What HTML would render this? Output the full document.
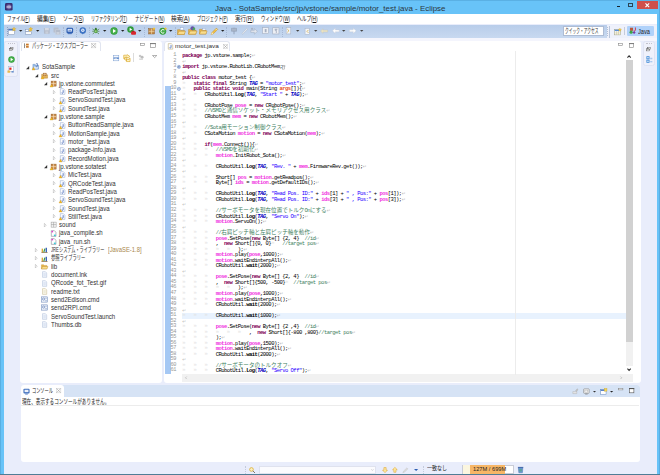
<!DOCTYPE html><html lang="ja"><head><meta charset="utf-8"><title>Java - SotaSample/src/jp/vstone/sample/motor_test.java - Eclipse</title><style>
*{box-sizing:border-box;margin:0;padding:0}
html,body{width:660px;height:475px;overflow:hidden}
body{position:relative;background:#68c3f8;box-shadow:inset 0.8px 0.8px 0 #56aadd, inset -0.8px 0 0 #56aadd;font-family:"Liberation Sans","Noto Sans CJK JP",sans-serif;color:#222;}
.abs{position:absolute}
.f{position:absolute;white-space:pre;transform-origin:0 50%;display:block}
svg{position:absolute;overflow:visible}
#code{position:absolute;left:182.3px;top:53.15px;font-family:"Liberation Mono","Noto Sans CJK JP",monospace;font-size:5.5px;line-height:5.54px;letter-spacing:-0.525px;white-space:pre;color:#000}
#code div{height:5.54px}
#code .j{font-size:5.55px;letter-spacing:0}
#code .k{color:#7f0055;font-weight:bold}
#code .s{color:#2a00ff}
#code .c{color:#3f7f5f}
#code .v{color:#f032e0;font-weight:bold}
#code .p{color:#e8501c;font-weight:bold}
#code .t{color:#0000c0;font-weight:bold;font-style:italic}
#code .b{font-weight:bold}
#code .tb{position:relative}
#code .tb::before{content:"\00bb";position:absolute;left:0;top:0;color:#e2e2e2}
#code div::after{content:"\21b5";color:#b0b0b0;font-family:"DejaVu Sans",sans-serif;font-size:4.6px;letter-spacing:0;font-weight:normal;font-style:normal}
#ln{position:absolute;left:164.3px;width:11.8px;top:53.15px;text-align:right;font-family:"Liberation Mono",monospace;font-size:5.3px;line-height:5.54px;letter-spacing:-0.405px;color:#979797}
#ln div{height:5.54px}
</style></head><body>
<svg style="left:4.5px;top:3.3px" width="7.6" height="7.6" viewBox="0 0 16 16"><rect width="16" height="16" rx="3" fill="#3a2d6e"/><circle cx="8" cy="8" r="6" fill="#564a8c"/><circle cx="8.5" cy="8" r="4.3" fill="#8f86b8"/><rect x="3" y="6.5" width="10" height="1" fill="#d8d4ea"/><rect x="3" y="8.8" width="10" height="1" fill="#d8d4ea"/></svg>
<span class="f" style="left:215.00px;top:3.86px;font-size:7.6px;line-height:9.88px;color:#2a3640;transform:scaleX(1.0442)">Java - SotaSample/src/jp/vstone/sample/motor_test.java - Eclipse</span>
<div class="abs" style="left:616.80px;top:5.70px;width:3.40px;height:1.40px;background:#16222b"></div>
<div class="abs" style="left:628.20px;top:3.10px;width:4.70px;height:3.80px;border:0.8px solid #2b4557;border-top-width:1.4px"></div>
<div class="abs" style="left:637.10px;top:0.60px;width:20.50px;height:8.60px;background:#cf4f4b"></div>
<svg style="left:645.2px;top:2.8px" width="4.6" height="4.6" viewBox="0 0 10 10"><path d="M1 1L9 9M9 1L1 9" stroke="#fff" stroke-width="2.4" fill="none"/></svg>
<div class="abs" style="left:3.50px;top:14.00px;width:653.40px;height:460.00px;background:#e9edfb"></div>
<div class="abs" style="left:0.00px;top:473.80px;width:660.00px;height:1.20px;background:#4f7d96"></div>
<div class="abs" style="left:3.50px;top:14.00px;width:653.30px;height:10.40px;background:#fff"></div>
<span class="f" style="left:6.50px;top:14.75px;font-size:6.7px;line-height:8.71px;color:#1a1a1a;transform:scaleX(0.6658)">ファイル</span><span class="f" style="left:24.31px;top:14.75px;font-size:6.7px;line-height:8.71px;color:#1a1a1a;transform:scaleX(0.6658)">(<u>F</u>)</span>
<span class="f" style="left:37.00px;top:14.75px;font-size:6.7px;line-height:8.71px;color:#1a1a1a;transform:scaleX(0.8521)">編集</span><span class="f" style="left:48.40px;top:14.75px;font-size:6.7px;line-height:8.71px;color:#1a1a1a;transform:scaleX(0.8521)">(<u>E</u>)</span>
<span class="f" style="left:62.50px;top:14.75px;font-size:6.7px;line-height:8.71px;color:#1a1a1a;transform:scaleX(0.7503)">ソース</span><span class="f" style="left:77.31px;top:14.75px;font-size:6.7px;line-height:8.71px;color:#1a1a1a;transform:scaleX(0.7503)">(<u>S</u>)</span>
<span class="f" style="left:90.50px;top:14.75px;font-size:6.7px;line-height:8.71px;color:#1a1a1a;transform:scaleX(0.5989)">リファクタリング</span><span class="f" style="left:122.38px;top:14.75px;font-size:6.7px;line-height:8.71px;color:#1a1a1a;transform:scaleX(0.5989)">(<u>T</u>)</span>
<span class="f" style="left:134.50px;top:14.75px;font-size:6.7px;line-height:8.71px;color:#1a1a1a;transform:scaleX(0.6903)">ナビゲート</span><span class="f" style="left:157.58px;top:14.75px;font-size:6.7px;line-height:8.71px;color:#1a1a1a;transform:scaleX(0.6903)">(<u>N</u>)</span>
<span class="f" style="left:171.00px;top:14.75px;font-size:6.7px;line-height:8.71px;color:#1a1a1a;transform:scaleX(0.8521)">検索</span><span class="f" style="left:182.40px;top:14.75px;font-size:6.7px;line-height:8.71px;color:#1a1a1a;transform:scaleX(0.8521)">(<u>A</u>)</span>
<span class="f" style="left:197.00px;top:14.75px;font-size:6.7px;line-height:8.71px;color:#1a1a1a;transform:scaleX(0.6320)">プロジェクト</span><span class="f" style="left:222.36px;top:14.75px;font-size:6.7px;line-height:8.71px;color:#1a1a1a;transform:scaleX(0.6320)">(<u>P</u>)</span>
<span class="f" style="left:235.00px;top:14.75px;font-size:6.7px;line-height:8.71px;color:#1a1a1a;transform:scaleX(0.8380)">実行</span><span class="f" style="left:246.21px;top:14.75px;font-size:6.7px;line-height:8.71px;color:#1a1a1a;transform:scaleX(0.8380)">(<u>R</u>)</span>
<span class="f" style="left:261.00px;top:14.75px;font-size:6.7px;line-height:8.71px;color:#1a1a1a;transform:scaleX(0.6558)">ウィンドウ</span><span class="f" style="left:282.93px;top:14.75px;font-size:6.7px;line-height:8.71px;color:#1a1a1a;transform:scaleX(0.6558)">(<u>W</u>)</span>
<span class="f" style="left:297.00px;top:14.75px;font-size:6.7px;line-height:8.71px;color:#1a1a1a;transform:scaleX(0.7153)">ヘルプ</span><span class="f" style="left:311.35px;top:14.75px;font-size:6.7px;line-height:8.71px;color:#1a1a1a;transform:scaleX(0.7153)">(<u>H</u>)</span>
<div class="abs" style="left:3.50px;top:24.50px;width:653.40px;height:13.90px;background:linear-gradient(#b8cdea,#c8d9f0)"></div>
<div class="abs" style="left:3.50px;top:38.40px;width:653.40px;height:2.50px;background:#f4f5fd"></div>
<div class="abs" style="left:6.65px;top:27.00px;width:0;height:9.00px;border-left:0.7px dotted #8ea3c4"></div>
<svg style="left:7.80px;top:26.90px" width="8.00" height="8.00" viewBox="0 0 16 16"><rect x="1" y="4" width="12" height="11" fill="#fff" stroke="#7d8fb0" stroke-width="1"/><rect x="1" y="4" width="12" height="3" fill="#4f78c0"/><path d="M12 0l1.2 2.8 2.8.4-2 2 .5 2.8-2.5-1.4-2.5 1.4.5-2.8-2-2 2.8-.4z" fill="#f3c43a" stroke="#c89a18" stroke-width=".5"/></svg>
<svg style="left:25.30px;top:27.05px" width="7.70" height="7.70" viewBox="0 0 16 16"><rect x="1" y="5" width="6" height="4" fill="#fff" stroke="#7d8fb0"/><rect x="1" y="10" width="12" height="5" fill="#fff" stroke="#7d8fb0"/><rect x="8" y="6" width="5" height="3" fill="#e8c060"/><path d="M12 0l1.2 2.8 2.8.4-2 2 .5 2.8-2.5-1.4-2.5 1.4.5-2.8-2-2 2.8-.4z" fill="#f3c43a" stroke="#c89a18" stroke-width=".5"/></svg>
<svg style="left:42.50px;top:27.05px" width="7.70" height="7.70" viewBox="0 0 16 16"><rect x="2" y="2" width="12" height="12" rx="1" fill="#b4bccb"/><rect x="4" y="2" width="8" height="5" fill="#d5dae4"/><rect x="5" y="9" width="6" height="5" fill="#c9cfdb"/></svg>
<svg style="left:52.80px;top:26.90px" width="8.00" height="8.00" viewBox="0 0 16 16"><rect x="1" y="1" width="10" height="10" rx="1" fill="#b9c0ce"/><rect x="5" y="5" width="10" height="10" rx="1" fill="#b4bccb" stroke="#d5dae4" stroke-width=".8"/><rect x="7" y="10" width="6" height="5" fill="#ccd2dd"/></svg>
<svg style="left:66.20px;top:27.10px" width="7.60" height="7.60" viewBox="0 0 16 16"><rect x="1" y="1.5" width="14" height="12" rx="3" fill="#2f5fb3"/><rect x="3.5" y="4" width="9" height="5.5" fill="#e9f0fb"/><rect x="5" y="6" width="6" height="1.4" fill="#2f5fb3"/><rect x="4" y="13.5" width="8" height="1.5" fill="#2f5fb3"/></svg>
<svg style="left:78.70px;top:27.10px" width="7.60" height="7.60" viewBox="0 0 16 16"><circle cx="8" cy="7.5" r="6.8" fill="#3d73c4"/><circle cx="8" cy="7" r="3.6" fill="#dfe9f8"/><path d="M6 12l2 4 2-4z" fill="#3d73c4"/><circle cx="8" cy="7" r="1.6" fill="#6f97d6"/></svg>
<svg style="left:92.00px;top:27.05px" width="7.70" height="7.70" viewBox="0 0 16 16"><ellipse cx="8" cy="8.5" rx="3.6" ry="4.6" fill="#4c9a3c"/><circle cx="8" cy="4" r="2.2" fill="#357a2a"/><path d="M1 4l4 3M15 4l-4 3M0.5 9h4M15.5 9h-4M1.5 14.5l3.6-3M14.5 14.5l-3.6-3" stroke="#357a2a" stroke-width="1.3" fill="none"/><ellipse cx="8" cy="9" rx="1.6" ry="2.4" fill="#a8d88a"/></svg>
<svg style="left:110.00px;top:26.90px" width="8.00" height="8.00" viewBox="0 0 16 16"><circle cx="8" cy="8" r="7.3" fill="#2f9b3a"/><circle cx="8" cy="8" r="6" fill="#46b04a"/><path d="M6 4.2v7.6L12 8z" fill="#fff"/></svg>
<svg style="left:127.00px;top:26.25px" width="9.30" height="9.30" viewBox="0 0 16 16"><circle cx="6" cy="6" r="5.6" fill="#2f9b3a"/><path d="M4.5 3.2v5.6L9 6z" fill="#fff"/><rect x="7" y="9.5" width="8.5" height="5.5" rx="1.5" fill="#d8262c"/><rect x="9" y="8.3" width="4" height="2" fill="#b01c22"/></svg>
<svg style="left:147.50px;top:27.05px" width="7.70" height="7.70" viewBox="0 0 16 16"><rect x="1.5" y="3.5" width="12" height="11" fill="#c08a4a" stroke="#8d5a24" stroke-width="1"/><path d="M1.5 9h12M7.5 3.5v11" stroke="#f4dcae" stroke-width="1.4"/><path d="M12.5 0l1 2.2 2.3.3-1.7 1.6.4 2.3-2-1.1-2 1.1.4-2.3L9.2 2.5l2.3-.3z" fill="#f3c43a"/></svg>
<svg style="left:158.70px;top:26.85px" width="8.10" height="8.10" viewBox="0 0 16 16"><circle cx="7.5" cy="8.5" r="6.8" fill="#2f9b3a"/><circle cx="7.5" cy="8.5" r="5.4" fill="#49ae4c"/><path d="M10.3 6.2a3.6 3.6 0 1 0 0 4.8" stroke="#fff" stroke-width="1.8" fill="none"/><path d="M13 0l.9 2 2.1.3-1.5 1.5.3 2.1-1.8-1-1.8 1 .3-2.1L10 2.3l2.1-.3z" fill="#f3c43a"/></svg>
<svg style="left:177.00px;top:26.65px" width="8.50" height="8.50" viewBox="0 0 16 16"><path d="M1 5h5l1.5 1.5H14V14H1z" fill="#e9b64a" stroke="#b88420" stroke-width=".8"/><path d="M1 14l2.5-6H16l-2.5 6z" fill="#f8dc8c" stroke="#b88420" stroke-width=".8"/><rect x="6" y="1.5" width="6" height="4" fill="#fff" stroke="#8aa0c8" stroke-width=".7"/></svg>
<svg style="left:187.80px;top:26.40px" width="9.00" height="9.00" viewBox="0 0 16 16"><path d="M1 6h5l1.5 1.5H14V14.5H1z" fill="#e9b64a" stroke="#b88420" stroke-width=".8"/><path d="M1 14.5l2.5-5.5H16l-2.5 5.5z" fill="#f8dc8c" stroke="#b88420" stroke-width=".8"/><circle cx="8" cy="4" r="3.6" fill="#6a4fa8"/><circle cx="10.5" cy="5" r="2.4" fill="#4aa85a"/></svg>
<svg style="left:198.70px;top:26.85px" width="8.10" height="8.10" viewBox="0 0 16 16"><path d="M1 4.5h5l1.5 1.5H14V14H1z" fill="#e9b64a" stroke="#b88420" stroke-width=".8"/><path d="M1 14l2.5-6H16l-2.5 6z" fill="#f8dc8c" stroke="#b88420" stroke-width=".8"/><rect x="7" y="3" width="6" height="3" fill="#fff" stroke="#8aa0c8" stroke-width=".7"/></svg>
<svg style="left:209.50px;top:26.65px" width="8.50" height="8.50" viewBox="0 0 16 16"><path d="M2 14.5l2-4.5 8-8 2.5 2.5-8 8z" fill="#f2c24a" stroke="#b88420" stroke-width=".8"/><path d="M2 14.5l2-4.5 2.5 2.5z" fill="#fbe9b8"/><path d="M10.5 3.5l2.5 2.5" stroke="#fff" stroke-width="1.2"/></svg>
<svg style="left:229.50px;top:26.90px" width="8.00" height="8.00" viewBox="0 0 16 16"><path d="M8 1.500v13" stroke="#8f9db4" stroke-width="1.800"/><path d="M3 2.500h10v6H3z" fill="#aab6c9" stroke="#8f9db4" stroke-width="1.200"/></svg>
<svg style="left:241.20px;top:27.10px" width="7.60" height="7.60" viewBox="0 0 16 16"><path d="M2 14L12 2.500l2 1.800-10 11z" fill="#eef1f6" stroke="#aab4c6" stroke-width="1"/></svg>
<svg style="left:250.30px;top:26.80px" width="8.20" height="8.20" viewBox="0 0 16 16"><path d="M1.500 6.500h7V3l6 5.500-6 5.500V10.500h-7z" fill="#e2e6ee" stroke="#9eaabe" stroke-width="1"/><circle cx="4" cy="3.500" r="2.200" fill="#a9b4c6"/></svg>
<svg style="left:261.50px;top:27.25px" width="7.30" height="7.30" viewBox="0 0 16 16"><rect x="1.500" y="1.500" width="13" height="13" fill="#eef0f5" stroke="#a5afc2" stroke-width="1.300"/><rect x="6" y="4.500" width="4" height="7" fill="#a5afc2"/></svg>
<svg style="left:272.00px;top:27.05px" width="7.70" height="7.70" viewBox="0 0 16 16"><rect x="1.500" y="1.500" width="13" height="13" fill="#eef0f5" stroke="#a5afc2" stroke-width="1.300"/><path d="M5.500 4.500h6M9 4.500v8M7 4.500v4" stroke="#97a2b6" stroke-width="1.500"/></svg>
<svg style="left:284.80px;top:27.20px" width="7.40" height="7.40" viewBox="0 0 16 16"><rect x="2.500" y="1" width="10" height="14" fill="#f2f4f8" stroke="#a5afc2" stroke-width="1.100"/><path d="M5 4.500l3.500 3.500L5 11.500" stroke="#cfa93c" stroke-width="1.700" fill="none"/></svg>
<svg style="left:303.70px;top:27.50px" width="6.80" height="6.80" viewBox="0 0 16 16"><rect x="2.500" y="1" width="10" height="14" fill="#f2f4f8" stroke="#a5afc2" stroke-width="1.100"/><path d="M10.500 4.500L7 8l3.500 3.500" stroke="#cfa93c" stroke-width="1.700" fill="none"/></svg>
<svg style="left:320.30px;top:26.80px" width="8.20" height="8.20" viewBox="0 0 16 16"><path d="M1 8l5-4.5V6h9v4H6v2.5z" fill="#e9e2c4" stroke="#c2c0b4" stroke-width=".7"/></svg>
<svg style="left:331.50px;top:27.05px" width="7.70" height="7.70" viewBox="0 0 16 16"><path d="M1 8l6-5.5V6h8v4H7v3.5z" fill="#fdfdfd" stroke="#c5cad6" stroke-width=".7"/></svg>
<svg style="left:349.20px;top:27.10px" width="7.60" height="7.60" viewBox="0 0 16 16"><path d="M15 8L9 2.5V6H1v4h8v3.5z" fill="#fdfdfd" stroke="#c5cad6" stroke-width=".7"/></svg>
<svg style="left:18.60px;top:30.15px" width="3.40" height="1.70" viewBox="0 0 10 5"><path d="M0 0H10L5 5Z" fill="#222"/></svg>
<svg style="left:36.10px;top:30.15px" width="3.40" height="1.70" viewBox="0 0 10 5"><path d="M0 0H10L5 5Z" fill="#222"/></svg>
<svg style="left:103.00px;top:30.15px" width="3.40" height="1.70" viewBox="0 0 10 5"><path d="M0 0H10L5 5Z" fill="#222"/></svg>
<svg style="left:120.80px;top:30.15px" width="3.40" height="1.70" viewBox="0 0 10 5"><path d="M0 0H10L5 5Z" fill="#222"/></svg>
<svg style="left:138.30px;top:30.15px" width="3.40" height="1.70" viewBox="0 0 10 5"><path d="M0 0H10L5 5Z" fill="#222"/></svg>
<svg style="left:169.10px;top:30.15px" width="3.40" height="1.70" viewBox="0 0 10 5"><path d="M0 0H10L5 5Z" fill="#222"/></svg>
<svg style="left:220.80px;top:30.15px" width="3.40" height="1.70" viewBox="0 0 10 5"><path d="M0 0H10L5 5Z" fill="#222"/></svg>
<svg style="left:296.30px;top:30.15px" width="3.40" height="1.70" viewBox="0 0 10 5"><path d="M0 0H10L5 5Z" fill="#444"/></svg>
<svg style="left:313.60px;top:30.15px" width="3.40" height="1.70" viewBox="0 0 10 5"><path d="M0 0H10L5 5Z" fill="#444"/></svg>
<svg style="left:342.00px;top:30.15px" width="3.40" height="1.70" viewBox="0 0 10 5"><path d="M0 0H10L5 5Z" fill="#444"/></svg>
<svg style="left:360.00px;top:30.15px" width="3.40" height="1.70" viewBox="0 0 10 5"><path d="M0 0H10L5 5Z" fill="#444"/></svg>
<div class="abs" style="left:62.95px;top:26.50px;width:0;height:10.00px;border-left:0.7px dotted #a7b8d4"></div>
<div class="abs" style="left:75.65px;top:26.50px;width:0;height:10.00px;border-left:0.7px dotted #a7b8d4"></div>
<div class="abs" style="left:88.85px;top:26.50px;width:0;height:10.00px;border-left:0.7px dotted #a7b8d4"></div>
<div class="abs" style="left:144.35px;top:26.50px;width:0;height:10.00px;border-left:0.7px dotted #a7b8d4"></div>
<div class="abs" style="left:174.65px;top:26.50px;width:0;height:10.00px;border-left:0.7px dotted #a7b8d4"></div>
<div class="abs" style="left:226.35px;top:26.50px;width:0;height:10.00px;border-left:0.7px dotted #a7b8d4"></div>
<div class="abs" style="left:281.85px;top:26.50px;width:0;height:10.00px;border-left:0.7px dotted #a7b8d4"></div>
<div class="abs" style="left:20.00px;top:40.50px;width:142.00px;height:342.50px;background:#fff;border-radius:3px"></div>
<div class="abs" style="left:163.80px;top:40.50px;width:476.90px;height:342.50px;background:#fff;border-radius:3px"></div>
<div class="abs" style="left:20.80px;top:385.00px;width:619.40px;height:77.20px;background:#fff;border-radius:3px"></div>
<div class="abs" style="left:20.80px;top:385.00px;width:619.40px;height:11.90px;background:#d6e3f5;border-radius:3px 3px 0 0"></div>
<div class="abs" style="left:4.40px;top:40.80px;width:13.60px;height:36.10px;background:#eff1fb;border:0.6px solid #dfe3f3;border-radius:2.5px"></div>
<div class="abs" style="left:7.5px;top:42.6px;width:7.5px;height:0;border-top:0.7px dotted #c2c2cc"></div>
<svg style="left:8.60px;top:47.30px" width="4.60" height="4.60" viewBox="0 0 16 16"><rect x="5" y="2" width="9" height="7" fill="#fff" stroke="#444" stroke-width="1.4"/><rect x="2" y="6" width="9" height="7" fill="#fff" stroke="#444" stroke-width="1.4"/><rect x="2" y="6" width="9" height="2" fill="#444"/></svg>
<svg style="left:7.60px;top:55.80px" width="7.00" height="7.00" viewBox="0 0 16 16"><circle cx="8" cy="8" r="7.3" fill="#2f9b3a"/><circle cx="8" cy="8" r="6" fill="#46b04a"/><path d="M6 4.2v7.6L12 8z" fill="#fff"/></svg>
<svg style="left:7.20px;top:66.10px" width="7.20" height="7.20" viewBox="0 0 16 16"><rect x="3" y="1.5" width="11" height="11" fill="#fff" stroke="#8fa6cc" stroke-width="1"/><rect x="5" y="3.5" width="5" height="5" fill="#e02828"/><rect x="1" y="10" width="6" height="5" fill="#e8b84a"/><rect x="10" y="11.5" width="5" height="3" fill="#5a86c8"/></svg>
<div class="abs" style="left:20.60px;top:40.80px;width:80.90px;height:10.20px;background:#fff;border:0.6px solid #e1e5f0;border-bottom:none;border-radius:3px 3px 0 0"></div>
<svg style="left:24.00px;top:43.20px" width="5.40" height="5.40" viewBox="0 0 16 16"><rect x="1" y="1" width="2" height="14" fill="#555"/><rect x="6" y="2" width="8" height="5" fill="#c9782c"/><rect x="6" y="9" width="8" height="5" fill="#c9782c"/><rect x="4" y="7.2" width="10" height="1.4" fill="#e8b46a"/></svg>
<span class="f" style="left:32.00px;top:41.55px;font-size:6.7px;line-height:8.71px;color:#1e1e1e;transform:scaleX(0.6002)">パッケージ・エクスプローラー</span>
<svg style="left:91.20px;top:43.30px" width="5.20" height="5.20" viewBox="0 0 16 16"><path d="M2 2l12 12M14 2L2 14" stroke="#8d8d8d" stroke-width="1.5"/><rect x="1" y="1" width="14" height="14" fill="none" stroke="#b9b9b9" stroke-width="1.2"/></svg>
<svg style="left:139.80px;top:43.00px" width="5.00" height="2.80" viewBox="0 0 5 2.8"><rect x="0.3" y="0.3" width="4.40" height="2.20" fill="#fff" stroke="#888" stroke-width="0.6"/></svg>
<svg style="left:150.20px;top:43.20px" width="5.80" height="5.00" viewBox="0 0 5.8 5"><rect x="0.3" y="0.3" width="5.20" height="4.40" fill="#fff" stroke="#808080" stroke-width="0.6"/><rect x="0" y="0" width="5.80" height="1.1" fill="#808080"/></svg>
<svg style="left:112.80px;top:54.50px" width="6.40" height="6.40" viewBox="0 0 16 16"><rect x="1.500" y="1.500" width="13" height="13" fill="#f4f8fd" stroke="#7fa0d2" stroke-width="1.300"/><rect x="1.500" y="6" width="13" height="4" fill="#5a86c8"/><rect x="3.500" y="7.300" width="7" height="1.500" fill="#fff"/></svg>
<svg style="left:122.60px;top:53.90px" width="7.80" height="7.80" viewBox="0 0 16 16"><path d="M9 1.500l5 3.500-5 3.500V6.500H3.500v3H1.500v-7H9z" fill="#fff6cc" stroke="#d9a520" stroke-width="1.300"/><path d="M7 7.500L2 11l5 3.500V12.500h5.500v-3h2v7H7z" fill="#fff6cc" stroke="#d9a520" stroke-width="1.300" transform="translate(0,-1)"/></svg>
<div class="abs" style="left:132.80px;top:53.00px;width:0.70px;height:9.00px;background:#dcdcdc"></div>
<svg style="left:137.80px;top:54.20px" width="6.60" height="6.60" viewBox="0 0 16 16"><circle cx="5" cy="5" r="3" fill="#c9c9c9"/><circle cx="10" cy="8" r="3.500" fill="#bdbdbd"/><rect x="3" y="11" width="9" height="3" fill="#cfcfcf"/></svg>
<svg style="left:151.70px;top:55.00px" width="5.30" height="3.20" viewBox="0 0 10 6"><path d="M1 1h8L5 5z" fill="#fff" stroke="#6a6a6a" stroke-width="1"/></svg>
<svg style="left:26.10px;top:65.60px" width="3.20" height="3.20" viewBox="0 0 10 10"><path d="M10 0V10H0z" fill="#333"/></svg>
<svg style="left:32.10px;top:63.45px" width="7.00" height="7.00" viewBox="0 0 16 16"><path d="M2 3h5l1.5 2H15v9H2z" fill="#9cc0ea" stroke="#5d86c0" stroke-width=".9"/><path d="M4 7h11l-1.5 7H2z" fill="#dbe9f8" stroke="#5d86c0" stroke-width=".8"/><path d="M9 1.5h3.5v5a2 2 0 0 1-4 0" stroke="#3a5fa8" stroke-width="1.4" fill="none"/><path d="M0 16l3.5-6.5L7 16z" fill="#f2b824" stroke="#c48a10" stroke-width=".6"/></svg>
<span class="f" style="left:41.70px;top:63.25px;font-size:6.5px;line-height:8px;color:#303030;transform:scaleX(0.935)">SotaSample</span>
<svg style="left:34.90px;top:73.91px" width="3.20" height="3.20" viewBox="0 0 10 10"><path d="M10 0V10H0z" fill="#333"/></svg>
<svg style="left:40.90px;top:71.76px" width="7.00" height="7.00" viewBox="0 0 16 16"><path d="M1.5 5h5l1.5 1.5H15V14H1.5z" fill="#e3b35a" stroke="#a97a2a" stroke-width=".9"/><rect x="5" y="2.5" width="7" height="6" fill="#c98a4c" stroke="#8d5a24" stroke-width=".8"/><path d="M5 5.5h7M8.5 2.5v6" stroke="#f4dcae" stroke-width="1"/><path d="M0 16l3.5-6.5L7 16z" fill="#f2b824" stroke="#c48a10" stroke-width=".6"/></svg>
<span class="f" style="left:50.50px;top:71.56px;font-size:6.5px;line-height:8px;color:#303030;transform:scaleX(0.935)">src</span>
<svg style="left:43.70px;top:82.22px" width="3.20" height="3.20" viewBox="0 0 10 10"><path d="M10 0V10H0z" fill="#333"/></svg>
<svg style="left:49.70px;top:80.07px" width="7.00" height="7.00" viewBox="0 0 16 16"><rect x="2.5" y="2.5" width="11.5" height="11.5" fill="#c98a4c" stroke="#8d5a24" stroke-width="1"/><path d="M2.5 8.2h11.5M8.2 2.5v11.5" stroke="#f6e2ba" stroke-width="1.5"/><path d="M0 16l3.5-6.5L7 16z" fill="#f2b824" stroke="#c48a10" stroke-width=".6"/></svg>
<span class="f" style="left:59.30px;top:79.87px;font-size:6.5px;line-height:8px;color:#303030;transform:scaleX(0.935)">jp.vstone.commutest</span>
<svg style="left:52.90px;top:89.63px" width="2.60" height="4.40" viewBox="0 0 7 12"><path d="M1 1l5 5-5 5z" fill="#fff" stroke="#a6a6a6" stroke-width="1.3"/></svg>
<svg style="left:58.50px;top:88.38px" width="7.00" height="7.00" viewBox="0 0 16 16"><path d="M3 1.5h7l3.5 3.5v9.5H3z" fill="#fbfcff" stroke="#7f97c4" stroke-width="1"/><path d="M9.5 5v5.2a2 2 0 0 1-3.8.6" stroke="#2f56b0" stroke-width="1.7" fill="none"/></svg>
<span class="f" style="left:68.10px;top:88.18px;font-size:6.5px;line-height:8px;color:#303030;transform:scaleX(0.935)">ReadPosTest.java</span>
<svg style="left:52.90px;top:97.94px" width="2.60" height="4.40" viewBox="0 0 7 12"><path d="M1 1l5 5-5 5z" fill="#fff" stroke="#a6a6a6" stroke-width="1.3"/></svg>
<svg style="left:58.50px;top:96.69px" width="7.00" height="7.00" viewBox="0 0 16 16"><path d="M3 1.5h7l3.5 3.5v9.5H3z" fill="#fbfcff" stroke="#7f97c4" stroke-width="1"/><path d="M9.5 5v5.2a2 2 0 0 1-3.8.6" stroke="#2f56b0" stroke-width="1.7" fill="none"/><path d="M0 16l3.5-6.5L7 16z" fill="#f2b824" stroke="#c48a10" stroke-width=".6"/></svg>
<span class="f" style="left:68.10px;top:96.49px;font-size:6.5px;line-height:8px;color:#303030;transform:scaleX(0.935)">ServoSoundTest.java</span>
<svg style="left:52.90px;top:106.25px" width="2.60" height="4.40" viewBox="0 0 7 12"><path d="M1 1l5 5-5 5z" fill="#fff" stroke="#a6a6a6" stroke-width="1.3"/></svg>
<svg style="left:58.50px;top:105.00px" width="7.00" height="7.00" viewBox="0 0 16 16"><path d="M3 1.5h7l3.5 3.5v9.5H3z" fill="#fbfcff" stroke="#7f97c4" stroke-width="1"/><path d="M9.5 5v5.2a2 2 0 0 1-3.8.6" stroke="#2f56b0" stroke-width="1.7" fill="none"/><path d="M0 16l3.5-6.5L7 16z" fill="#f2b824" stroke="#c48a10" stroke-width=".6"/></svg>
<span class="f" style="left:68.10px;top:104.80px;font-size:6.5px;line-height:8px;color:#303030;transform:scaleX(0.935)">SoundTest.java</span>
<svg style="left:43.70px;top:115.46px" width="3.20" height="3.20" viewBox="0 0 10 10"><path d="M10 0V10H0z" fill="#333"/></svg>
<svg style="left:49.70px;top:113.31px" width="7.00" height="7.00" viewBox="0 0 16 16"><rect x="2.5" y="2.5" width="11.5" height="11.5" fill="#c98a4c" stroke="#8d5a24" stroke-width="1"/><path d="M2.5 8.2h11.5M8.2 2.5v11.5" stroke="#f6e2ba" stroke-width="1.5"/><path d="M0 16l3.5-6.5L7 16z" fill="#f2b824" stroke="#c48a10" stroke-width=".6"/></svg>
<span class="f" style="left:59.30px;top:113.11px;font-size:6.5px;line-height:8px;color:#303030;transform:scaleX(0.935)">jp.vstone.sample</span>
<svg style="left:52.90px;top:122.87px" width="2.60" height="4.40" viewBox="0 0 7 12"><path d="M1 1l5 5-5 5z" fill="#fff" stroke="#a6a6a6" stroke-width="1.3"/></svg>
<svg style="left:58.50px;top:121.62px" width="7.00" height="7.00" viewBox="0 0 16 16"><path d="M3 1.5h7l3.5 3.5v9.5H3z" fill="#fbfcff" stroke="#7f97c4" stroke-width="1"/><path d="M9.5 5v5.2a2 2 0 0 1-3.8.6" stroke="#2f56b0" stroke-width="1.7" fill="none"/><path d="M0 16l3.5-6.5L7 16z" fill="#f2b824" stroke="#c48a10" stroke-width=".6"/></svg>
<span class="f" style="left:68.10px;top:121.42px;font-size:6.5px;line-height:8px;color:#303030;transform:scaleX(0.935)">ButtonReadSample.java</span>
<svg style="left:52.90px;top:131.18px" width="2.60" height="4.40" viewBox="0 0 7 12"><path d="M1 1l5 5-5 5z" fill="#fff" stroke="#a6a6a6" stroke-width="1.3"/></svg>
<svg style="left:58.50px;top:129.93px" width="7.00" height="7.00" viewBox="0 0 16 16"><path d="M3 1.5h7l3.5 3.5v9.5H3z" fill="#fbfcff" stroke="#7f97c4" stroke-width="1"/><path d="M9.5 5v5.2a2 2 0 0 1-3.8.6" stroke="#2f56b0" stroke-width="1.7" fill="none"/><path d="M0 16l3.5-6.5L7 16z" fill="#f2b824" stroke="#c48a10" stroke-width=".6"/></svg>
<span class="f" style="left:68.10px;top:129.73px;font-size:6.5px;line-height:8px;color:#303030;transform:scaleX(0.935)">MotionSample.java</span>
<svg style="left:52.90px;top:139.49px" width="2.60" height="4.40" viewBox="0 0 7 12"><path d="M1 1l5 5-5 5z" fill="#fff" stroke="#a6a6a6" stroke-width="1.3"/></svg>
<svg style="left:58.50px;top:138.24px" width="7.00" height="7.00" viewBox="0 0 16 16"><path d="M3 1.5h7l3.5 3.5v9.5H3z" fill="#fbfcff" stroke="#7f97c4" stroke-width="1"/><path d="M9.5 5v5.2a2 2 0 0 1-3.8.6" stroke="#2f56b0" stroke-width="1.7" fill="none"/></svg>
<span class="f" style="left:68.10px;top:138.04px;font-size:6.5px;line-height:8px;color:#303030;transform:scaleX(0.935)">motor_test.java</span>
<svg style="left:52.90px;top:147.80px" width="2.60" height="4.40" viewBox="0 0 7 12"><path d="M1 1l5 5-5 5z" fill="#fff" stroke="#a6a6a6" stroke-width="1.3"/></svg>
<svg style="left:58.50px;top:146.55px" width="7.00" height="7.00" viewBox="0 0 16 16"><path d="M3 1.5h7l3.5 3.5v9.5H3z" fill="#fbfcff" stroke="#7f97c4" stroke-width="1"/><path d="M9.5 5v5.2a2 2 0 0 1-3.8.6" stroke="#2f56b0" stroke-width="1.7" fill="none"/></svg>
<span class="f" style="left:68.10px;top:146.35px;font-size:6.5px;line-height:8px;color:#303030;transform:scaleX(0.935)">package-info.java</span>
<svg style="left:52.90px;top:156.11px" width="2.60" height="4.40" viewBox="0 0 7 12"><path d="M1 1l5 5-5 5z" fill="#fff" stroke="#a6a6a6" stroke-width="1.3"/></svg>
<svg style="left:58.50px;top:154.86px" width="7.00" height="7.00" viewBox="0 0 16 16"><path d="M3 1.5h7l3.5 3.5v9.5H3z" fill="#fbfcff" stroke="#7f97c4" stroke-width="1"/><path d="M9.5 5v5.2a2 2 0 0 1-3.8.6" stroke="#2f56b0" stroke-width="1.7" fill="none"/><path d="M0 16l3.5-6.5L7 16z" fill="#f2b824" stroke="#c48a10" stroke-width=".6"/></svg>
<span class="f" style="left:68.10px;top:154.66px;font-size:6.5px;line-height:8px;color:#303030;transform:scaleX(0.935)">RecordMotion.java</span>
<svg style="left:43.70px;top:165.32px" width="3.20" height="3.20" viewBox="0 0 10 10"><path d="M10 0V10H0z" fill="#333"/></svg>
<svg style="left:49.70px;top:163.17px" width="7.00" height="7.00" viewBox="0 0 16 16"><rect x="2.5" y="2.5" width="11.5" height="11.5" fill="#c98a4c" stroke="#8d5a24" stroke-width="1"/><path d="M2.5 8.2h11.5M8.2 2.5v11.5" stroke="#f6e2ba" stroke-width="1.5"/><path d="M0 16l3.5-6.5L7 16z" fill="#f2b824" stroke="#c48a10" stroke-width=".6"/></svg>
<span class="f" style="left:59.30px;top:162.97px;font-size:6.5px;line-height:8px;color:#303030;transform:scaleX(0.935)">jp.vstone.sotatest</span>
<svg style="left:52.90px;top:172.73px" width="2.60" height="4.40" viewBox="0 0 7 12"><path d="M1 1l5 5-5 5z" fill="#fff" stroke="#a6a6a6" stroke-width="1.3"/></svg>
<svg style="left:58.50px;top:171.48px" width="7.00" height="7.00" viewBox="0 0 16 16"><path d="M3 1.5h7l3.5 3.5v9.5H3z" fill="#fbfcff" stroke="#7f97c4" stroke-width="1"/><path d="M9.5 5v5.2a2 2 0 0 1-3.8.6" stroke="#2f56b0" stroke-width="1.7" fill="none"/><path d="M0 16l3.5-6.5L7 16z" fill="#f2b824" stroke="#c48a10" stroke-width=".6"/></svg>
<span class="f" style="left:68.10px;top:171.28px;font-size:6.5px;line-height:8px;color:#303030;transform:scaleX(0.935)">MicTest.java</span>
<svg style="left:52.90px;top:181.04px" width="2.60" height="4.40" viewBox="0 0 7 12"><path d="M1 1l5 5-5 5z" fill="#fff" stroke="#a6a6a6" stroke-width="1.3"/></svg>
<svg style="left:58.50px;top:179.79px" width="7.00" height="7.00" viewBox="0 0 16 16"><path d="M3 1.5h7l3.5 3.5v9.5H3z" fill="#fbfcff" stroke="#7f97c4" stroke-width="1"/><path d="M9.5 5v5.2a2 2 0 0 1-3.8.6" stroke="#2f56b0" stroke-width="1.7" fill="none"/><path d="M0 16l3.5-6.5L7 16z" fill="#f2b824" stroke="#c48a10" stroke-width=".6"/></svg>
<span class="f" style="left:68.10px;top:179.59px;font-size:6.5px;line-height:8px;color:#303030;transform:scaleX(0.935)">QRCodeTest.java</span>
<svg style="left:52.90px;top:189.35px" width="2.60" height="4.40" viewBox="0 0 7 12"><path d="M1 1l5 5-5 5z" fill="#fff" stroke="#a6a6a6" stroke-width="1.3"/></svg>
<svg style="left:58.50px;top:188.10px" width="7.00" height="7.00" viewBox="0 0 16 16"><path d="M3 1.5h7l3.5 3.5v9.5H3z" fill="#fbfcff" stroke="#7f97c4" stroke-width="1"/><path d="M9.5 5v5.2a2 2 0 0 1-3.8.6" stroke="#2f56b0" stroke-width="1.7" fill="none"/></svg>
<span class="f" style="left:68.10px;top:187.90px;font-size:6.5px;line-height:8px;color:#303030;transform:scaleX(0.935)">ReadPosTest.java</span>
<svg style="left:52.90px;top:197.66px" width="2.60" height="4.40" viewBox="0 0 7 12"><path d="M1 1l5 5-5 5z" fill="#fff" stroke="#a6a6a6" stroke-width="1.3"/></svg>
<svg style="left:58.50px;top:196.41px" width="7.00" height="7.00" viewBox="0 0 16 16"><path d="M3 1.5h7l3.5 3.5v9.5H3z" fill="#fbfcff" stroke="#7f97c4" stroke-width="1"/><path d="M9.5 5v5.2a2 2 0 0 1-3.8.6" stroke="#2f56b0" stroke-width="1.7" fill="none"/><path d="M0 16l3.5-6.5L7 16z" fill="#f2b824" stroke="#c48a10" stroke-width=".6"/></svg>
<span class="f" style="left:68.10px;top:196.21px;font-size:6.5px;line-height:8px;color:#303030;transform:scaleX(0.935)">ServoSoundTest.java</span>
<svg style="left:52.90px;top:205.97px" width="2.60" height="4.40" viewBox="0 0 7 12"><path d="M1 1l5 5-5 5z" fill="#fff" stroke="#a6a6a6" stroke-width="1.3"/></svg>
<svg style="left:58.50px;top:204.72px" width="7.00" height="7.00" viewBox="0 0 16 16"><path d="M3 1.5h7l3.5 3.5v9.5H3z" fill="#fbfcff" stroke="#7f97c4" stroke-width="1"/><path d="M9.5 5v5.2a2 2 0 0 1-3.8.6" stroke="#2f56b0" stroke-width="1.7" fill="none"/><path d="M0 16l3.5-6.5L7 16z" fill="#f2b824" stroke="#c48a10" stroke-width=".6"/></svg>
<span class="f" style="left:68.10px;top:204.52px;font-size:6.5px;line-height:8px;color:#303030;transform:scaleX(0.935)">SoundTest.java</span>
<svg style="left:52.90px;top:214.28px" width="2.60" height="4.40" viewBox="0 0 7 12"><path d="M1 1l5 5-5 5z" fill="#fff" stroke="#a6a6a6" stroke-width="1.3"/></svg>
<svg style="left:58.50px;top:213.03px" width="7.00" height="7.00" viewBox="0 0 16 16"><path d="M3 1.5h7l3.5 3.5v9.5H3z" fill="#fbfcff" stroke="#7f97c4" stroke-width="1"/><path d="M9.5 5v5.2a2 2 0 0 1-3.8.6" stroke="#2f56b0" stroke-width="1.7" fill="none"/><path d="M0 16l3.5-6.5L7 16z" fill="#f2b824" stroke="#c48a10" stroke-width=".6"/></svg>
<span class="f" style="left:68.10px;top:212.83px;font-size:6.5px;line-height:8px;color:#303030;transform:scaleX(0.935)">StillTest.java</span>
<svg style="left:44.10px;top:222.59px" width="2.60" height="4.40" viewBox="0 0 7 12"><path d="M1 1l5 5-5 5z" fill="#fff" stroke="#a6a6a6" stroke-width="1.3"/></svg>
<svg style="left:49.70px;top:221.34px" width="7.00" height="7.00" viewBox="0 0 16 16"><rect x="2.5" y="2.5" width="11.5" height="11.5" fill="#f4f4f4" stroke="#8c8c8c" stroke-width="1"/><path d="M2.5 8.2h11.5M8.2 2.5v11.5" stroke="#9a9a9a" stroke-width="1.2"/></svg>
<span class="f" style="left:59.30px;top:221.14px;font-size:6.5px;line-height:8px;color:#303030;transform:scaleX(0.935)">sound</span>
<svg style="left:49.70px;top:229.65px" width="7.00" height="7.00" viewBox="0 0 16 16"><path d="M3 1.5h7l3.5 3.5v9.5H3z" fill="#fff" stroke="#6a6a78" stroke-width="1.1"/><rect x="3.5" y="2" width="3.5" height="3.5" fill="#e83ad0"/><rect x="9" y="10.5" width="4" height="3.5" fill="#38c8d8"/></svg>
<span class="f" style="left:59.30px;top:229.45px;font-size:6.5px;line-height:8px;color:#303030;transform:scaleX(0.935)">java_compile.sh</span>
<svg style="left:49.70px;top:237.96px" width="7.00" height="7.00" viewBox="0 0 16 16"><path d="M3 1.5h7l3.5 3.5v9.5H3z" fill="#fff" stroke="#6a6a78" stroke-width="1.1"/><rect x="3.5" y="2" width="3.5" height="3.5" fill="#e83ad0"/><rect x="9" y="10.5" width="4" height="3.5" fill="#38c8d8"/></svg>
<span class="f" style="left:59.30px;top:237.76px;font-size:6.5px;line-height:8px;color:#303030;transform:scaleX(0.935)">java_run.sh</span>
<svg style="left:35.30px;top:247.52px" width="2.60" height="4.40" viewBox="0 0 7 12"><path d="M1 1l5 5-5 5z" fill="#fff" stroke="#a6a6a6" stroke-width="1.3"/></svg>
<svg style="left:40.90px;top:246.27px" width="7.00" height="7.00" viewBox="0 0 16 16"><rect x="1.5" y="6" width="3" height="8.5" fill="#d8a838"/><path d="M5 14.5l2.5-9 2.8.8-2.5 8.2z" fill="#3f9a4a"/><rect x="10.5" y="4" width="3.2" height="10.5" fill="#3f66b8"/><rect x="1" y="14" width="14" height="1.4" fill="#7a5a28"/></svg>
<span class="f" style="left:50.50px;top:245.63px;font-size:6.6px;line-height:8.58px;color:#303030;transform:scaleX(0.6267)">JRE </span><span class="f" style="left:59.46px;top:245.63px;font-size:6.6px;line-height:8.58px;color:#303030;transform:scaleX(0.6267)">システム・ライブラリー</span>
<span class="f" style="left:107.80px;top:245.63px;font-size:6.6px;line-height:8.58px;color:#a8884c;transform:scaleX(0.8901)">[JavaSE-1.8]</span>
<svg style="left:35.30px;top:255.83px" width="2.60" height="4.40" viewBox="0 0 7 12"><path d="M1 1l5 5-5 5z" fill="#fff" stroke="#a6a6a6" stroke-width="1.3"/></svg>
<svg style="left:40.90px;top:254.58px" width="7.00" height="7.00" viewBox="0 0 16 16"><rect x="1.5" y="6" width="3" height="8.5" fill="#d8a838"/><path d="M5 14.5l2.5-9 2.8.8-2.5 8.2z" fill="#3f9a4a"/><rect x="10.5" y="4" width="3.2" height="10.5" fill="#3f66b8"/><rect x="1" y="14" width="14" height="1.4" fill="#7a5a28"/></svg>
<span class="f" style="left:50.50px;top:253.94px;font-size:6.6px;line-height:8.58px;color:#303030;transform:scaleX(0.6502)">参照ライブラリー</span>
<svg style="left:35.30px;top:264.14px" width="2.60" height="4.40" viewBox="0 0 7 12"><path d="M1 1l5 5-5 5z" fill="#fff" stroke="#a6a6a6" stroke-width="1.3"/></svg>
<svg style="left:40.90px;top:262.89px" width="7.00" height="7.00" viewBox="0 0 16 16"><path d="M1 4h5l1.5 1.5H13.5V13.5H1z" fill="#e9b64a" stroke="#b88420" stroke-width=".8"/><path d="M1 13.500l2.500-5.500H16l-2.500 5.500z" fill="#f8dc8c" stroke="#b88420" stroke-width=".8"/></svg>
<span class="f" style="left:50.50px;top:262.69px;font-size:6.5px;line-height:8px;color:#303030;transform:scaleX(0.935)">lib</span>
<svg style="left:40.90px;top:271.20px" width="7.00" height="7.00" viewBox="0 0 16 16"><path d="M3.5 1.500h6.500l3 3v10H3.500z" fill="#f2f6fc" stroke="#9fb2d2" stroke-width="1"/><path d="M5.500 6h5.500M5.500 8.500h5.500M5.500 11h5.500" stroke="#b9c9e4" stroke-width=".9"/></svg>
<span class="f" style="left:50.50px;top:271.00px;font-size:6.5px;line-height:8px;color:#303030;transform:scaleX(0.935)">document.lnk</span>
<svg style="left:40.90px;top:279.51px" width="7.00" height="7.00" viewBox="0 0 16 16"><path d="M3.5 1.500h6.500l3 3v10H3.500z" fill="#f2f6fc" stroke="#9fb2d2" stroke-width="1"/><path d="M5.500 6h5.500M5.500 8.500h5.500M5.500 11h5.500" stroke="#b9c9e4" stroke-width=".9"/></svg>
<span class="f" style="left:50.50px;top:279.31px;font-size:6.5px;line-height:8px;color:#303030;transform:scaleX(0.935)">QRcode_fot_Test.gif</span>
<svg style="left:40.90px;top:287.82px" width="7.00" height="7.00" viewBox="0 0 16 16"><path d="M3.500 1.500h6.500l3 3v10H3.500z" fill="#fffdf2" stroke="#b7a878" stroke-width="1"/><path d="M5.500 6h5.500M5.500 8.500h5.500M5.500 11h5.500" stroke="#cfc6a4" stroke-width=".9"/></svg>
<span class="f" style="left:50.50px;top:287.62px;font-size:6.5px;line-height:8px;color:#303030;transform:scaleX(0.935)">readme.txt</span>
<svg style="left:40.90px;top:296.13px" width="7.00" height="7.00" viewBox="0 0 16 16"><rect x="1.500" y="2" width="13" height="12" fill="#eef3fb" stroke="#5a78b0" stroke-width="1.100"/><circle cx="6" cy="7" r="2.600" fill="none" stroke="#4a6aa8" stroke-width="1.200"/><path d="M9.500 11h4M10 5h3" stroke="#4a6aa8" stroke-width="1.100"/></svg>
<span class="f" style="left:50.50px;top:295.93px;font-size:6.5px;line-height:8px;color:#303030;transform:scaleX(0.935)">send2Edison.cmd</span>
<svg style="left:40.90px;top:304.44px" width="7.00" height="7.00" viewBox="0 0 16 16"><rect x="1.500" y="2" width="13" height="12" fill="#eef3fb" stroke="#5a78b0" stroke-width="1.100"/><circle cx="6" cy="7" r="2.600" fill="none" stroke="#4a6aa8" stroke-width="1.200"/><path d="M9.500 11h4M10 5h3" stroke="#4a6aa8" stroke-width="1.100"/></svg>
<span class="f" style="left:50.50px;top:304.24px;font-size:6.5px;line-height:8px;color:#303030;transform:scaleX(0.935)">send2RPI.cmd</span>
<svg style="left:40.90px;top:312.75px" width="7.00" height="7.00" viewBox="0 0 16 16"><path d="M3.5 1.500h6.500l3 3v10H3.500z" fill="#f2f6fc" stroke="#9fb2d2" stroke-width="1"/><path d="M5.500 6h5.500M5.500 8.500h5.500M5.500 11h5.500" stroke="#b9c9e4" stroke-width=".9"/></svg>
<span class="f" style="left:50.50px;top:312.55px;font-size:6.5px;line-height:8px;color:#303030;transform:scaleX(0.935)">ServoSoundTest.launch</span>
<svg style="left:40.90px;top:321.06px" width="7.00" height="7.00" viewBox="0 0 16 16"><path d="M3.5 1.500h6.500l3 3v10H3.500z" fill="#f2f6fc" stroke="#9fb2d2" stroke-width="1"/><path d="M5.500 6h5.500M5.500 8.500h5.500M5.500 11h5.500" stroke="#b9c9e4" stroke-width=".9"/></svg>
<span class="f" style="left:50.50px;top:320.86px;font-size:6.5px;line-height:8px;color:#303030;transform:scaleX(0.935)">Thumbs.db</span>
<div class="abs" style="left:164.40px;top:40.80px;width:66.10px;height:10.20px;background:#fff;border:0.6px solid #e1e5f0;border-bottom:none;border-radius:3px 3px 0 0"></div>
<svg style="left:166.60px;top:42.70px" width="6.80" height="6.80" viewBox="0 0 16 16"><path d="M3 1.5h7l3.5 3.5v9.500H3z" fill="#fbfcff" stroke="#b09a5a" stroke-width="1.1"/><path d="M9.500 5v5.200a2 2 0 0 1-3.800.6" stroke="#2f56b0" stroke-width="1.700" fill="none"/></svg>
<span class="f" style="left:175.30px;top:42.37px;font-size:6.2px;line-height:8.06px;color:#303030;transform:scaleX(1.0328)">motor_test.java</span>
<svg style="left:223.40px;top:43.80px" width="5.00" height="5.00" viewBox="0 0 16 16"><path d="M2 2l12 12M14 2L2 14" stroke="#8d8d8d" stroke-width="1.500"/><rect x="1" y="1" width="14" height="14" fill="none" stroke="#b9b9b9" stroke-width="1.200"/></svg>
<svg style="left:618.20px;top:43.00px" width="4.80" height="2.70" viewBox="0 0 4.8 2.7"><rect x="0.3" y="0.3" width="4.20" height="2.10" fill="#fff" stroke="#888" stroke-width="0.6"/></svg>
<svg style="left:629.00px;top:43.20px" width="5.00" height="4.70" viewBox="0 0 5 4.7"><rect x="0.3" y="0.3" width="4.40" height="4.10" fill="#fff" stroke="#808080" stroke-width="0.6"/><rect x="0" y="0" width="5.00" height="1.1" fill="#808080"/></svg>
<div class="abs" style="left:626.00px;top:60.00px;width:6.80px;height:306.00px;background:#f1f1f1"></div>
<div class="abs" style="left:626.00px;top:60.00px;width:6.80px;height:281.50px;background:#d1d1d1"></div>
<svg style="left:627.20px;top:55.00px" width="4.20" height="3.20" viewBox="0 0 10 7.5"><path d="M1 6L5 1.800 9 6" stroke="#333" stroke-width="2.600" fill="none"/></svg>
<svg style="left:627.20px;top:368.20px" width="4.20" height="3.20" viewBox="0 0 10 7.5"><path d="M1 1.500L5 5.700 9 1.500" stroke="#333" stroke-width="2.600" fill="none"/></svg>
<div class="abs" style="left:182.00px;top:374.00px;width:451.00px;height:7.60px;background:#f1f1f1"></div>
<svg style="left:185.00px;top:376.00px" width="2.20" height="3.60" viewBox="0 0 7 10"><path d="M5.500 1L1.500 5l4 4" stroke="#9a9a9a" stroke-width="1.600" fill="none"/></svg>
<svg style="left:620.40px;top:376.00px" width="2.20" height="3.60" viewBox="0 0 7 10"><path d="M1.500 1L5.500 5l-4 4" stroke="#9a9a9a" stroke-width="1.600" fill="none"/></svg>
<div class="abs" style="left:642.60px;top:40.80px;width:12.80px;height:25.00px;background:#eff1fb;border:0.6px solid #dfe3f3;border-radius:2.5px"></div>
<div class="abs" style="left:645.5px;top:42.8px;width:6.5px;height:0;border-top:0.7px dotted #c2c2cc"></div>
<svg style="left:646.40px;top:46.80px" width="4.80" height="4.80" viewBox="0 0 16 16"><rect x="5" y="2" width="9" height="7" fill="#fff" stroke="#444" stroke-width="1.400"/><rect x="2" y="6" width="9" height="7" fill="#fff" stroke="#444" stroke-width="1.400"/><rect x="2" y="6" width="9" height="2" fill="#444"/></svg>
<svg style="left:645.60px;top:56.40px" width="7.00" height="7.00" viewBox="0 0 16 16"><rect x="1" y="0.500" width="7" height="7" fill="#3f8ad8"/><rect x="3" y="2.500" width="3" height="3" fill="#fff"/><rect x="1" y="8.500" width="7" height="7" fill="#3f8ad8"/><rect x="3" y="10.500" width="3" height="3" fill="#fff"/><rect x="9.500" y="4" width="5" height="3.500" fill="#a9c8ee"/><rect x="9.500" y="11.500" width="5" height="3" fill="#a9c8ee"/></svg>
<div class="abs" style="left:606.50px;top:24.50px;width:50.40px;height:13.90px;background:#eef1fb"></div>
<div class="abs" style="left:609.00px;top:25.50px;width:0.60px;height:12.00px;background:#b9c6dc"></div>
<div class="abs" style="left:562.50px;top:26.00px;width:41.30px;height:10.20px;background:#fff;border:0.6px solid #aebcd4"></div>
<span class="f" style="left:564.50px;top:26.84px;font-size:6.7px;line-height:8.71px;color:#333;transform:scaleX(0.5610)">クイック・アクセス</span>
<div class="abs" style="left:607.25px;top:27.00px;width:0;height:9.00px;border-left:0.7px dotted #b4bfd4"></div>
<svg style="left:613.60px;top:27.60px" width="7.60" height="7.60" viewBox="0 0 16 16"><rect x="1.500" y="3.500" width="12" height="11" fill="#fffef2" stroke="#9a9a78" stroke-width="1"/><rect x="1.500" y="3.500" width="12" height="3" fill="#5a8fd8"/><path d="M1.500 10.500h12M5.500 6.500v8M9.500 6.500v8" stroke="#b8b088" stroke-width=".9"/><path d="M12.500 0l1.100 2.400 2.400.3-1.800 1.700.5 2.500-2.200-1.200-2.200 1.200.5-2.500L9 2.700l2.400-.3z" fill="#f6cf48" stroke="#d0a020" stroke-width=".5"/></svg>
<div class="abs" style="left:624.00px;top:27.20px;width:0.60px;height:8.00px;background:#c6cbd9"></div>
<div class="abs" style="left:627.00px;top:26.00px;width:26.70px;height:10.10px;background:#b0d2fa;border-radius:1.2px"></div>
<svg style="left:629.00px;top:27.20px" width="7.60" height="7.60" viewBox="0 0 16 16"><rect x="2" y="1.500" width="6.500" height="6.500" fill="#b8583c"/><circle cx="4.500" cy="11" r="3.400" fill="#3aa544"/><rect x="8.500" y="9.500" width="4.500" height="4.500" fill="#7a3aa8" transform="rotate(45 10.750 11.750)"/><path d="M13.500 1v5.500a2 2 0 0 1-3.500 1" stroke="#d42434" stroke-width="1.800" fill="none"/></svg>
<span class="f" style="left:638.30px;top:26.62px;font-size:7.2px;line-height:9.36px;color:#1a1a1a;transform:scaleX(0.7835)">Java</span>
<div class="abs" style="left:21.20px;top:385.40px;width:42.80px;height:11.60px;background:#fff;border-radius:3px 3px 0 0"></div>
<svg style="left:23.00px;top:387.60px" width="7.00" height="7.00" viewBox="0 0 16 16"><rect x="1" y="1.500" width="14" height="11" rx="2.500" fill="#3f6fbe"/><rect x="3.500" y="4" width="9" height="5.500" fill="#eef3fb"/><rect x="5" y="13" width="6" height="1.800" fill="#3f6fbe"/></svg>
<span class="f" style="left:31.60px;top:386.64px;font-size:6.7px;line-height:8.71px;color:#1e1e1e;transform:scaleX(0.6250)">コンソール</span>
<svg style="left:56.00px;top:388.40px" width="5.20" height="5.20" viewBox="0 0 16 16"><path d="M2 2l12 12M14 2L2 14" stroke="#8d8d8d" stroke-width="1.500"/><rect x="1" y="1" width="14" height="14" fill="none" stroke="#b9b9b9" stroke-width="1.200"/></svg>
<span class="f" style="left:22.20px;top:397.54px;font-size:6.7px;line-height:8.71px;color:#1e1e1e;transform:scaleX(0.6881)">現在、表示するコンソールがありません。</span>
<div class="abs" style="left:21.00px;top:404.50px;width:618.00px;height:0.60px;background:#ececec"></div>
<svg style="left:572.00px;top:388.00px" width="6.40" height="6.40" viewBox="0 0 16 16"><path d="M2 9h10v5H2z" fill="#e6e6e6" stroke="#a9a9a9" stroke-width="1"/><path d="M9 7l4-5 2 1.500-3 5z" fill="#c9c9c9" stroke="#9a9a9a" stroke-width=".8"/></svg>
<svg style="left:583.00px;top:387.60px" width="6.80" height="6.80" viewBox="0 0 16 16"><rect x="1.500" y="2" width="13" height="10.500" rx="1.500" fill="#f4f4f4" stroke="#7a7a7a" stroke-width="1.300"/><rect x="4.500" y="5" width="7" height="4.500" fill="#fff" stroke="#9a9a9a" stroke-width=".9"/><rect x="5" y="13.500" width="6" height="1.500" fill="#7a7a7a"/></svg>
<svg style="left:592.80px;top:390.85px" width="3.00" height="1.50" viewBox="0 0 10 5"><path d="M0 0H10L5 5Z" fill="#333"/></svg>
<svg style="left:599.80px;top:387.60px" width="7.20" height="7.20" viewBox="0 0 16 16"><rect x="1.500" y="3.500" width="12" height="11" fill="#fff" stroke="#5d86c0" stroke-width="1.100"/><rect x="1.500" y="3.500" width="12" height="3" fill="#4f78c0"/><rect x="9.500" y="1" width="6" height="6" fill="#f3d45a" stroke="#c8a018" stroke-width=".7"/></svg>
<svg style="left:610.20px;top:390.80px" width="3.20" height="1.60" viewBox="0 0 10 5"><path d="M0 0H10L5 5Z" fill="#222"/></svg>
<svg style="left:618.00px;top:388.00px" width="5.20" height="2.20" viewBox="0 0 5.2 2.2"><rect x="0.3" y="0.3" width="4.60" height="1.60" fill="#fff" stroke="#888" stroke-width="0.6"/></svg>
<svg style="left:628.80px;top:388.40px" width="5.20" height="5.10" viewBox="0 0 5.2 5.1"><rect x="0.3" y="0.3" width="4.60" height="4.50" fill="#fff" stroke="#555" stroke-width="0.6"/><rect x="0" y="0" width="5.20" height="1.1" fill="#555"/></svg>
<div class="abs" style="left:245.25px;top:465.50px;width:0;height:8.00px;border-left:0.7px dotted #c4cbdc"></div>
<svg style="left:249.20px;top:466.50px" width="6.60" height="6.60" viewBox="0 0 16 16"><circle cx="6" cy="6" r="4.500" fill="#fbf0c0" stroke="#d6a21a" stroke-width="1.600"/><path d="M9.500 9.500l5 5" stroke="#7a6a5a" stroke-width="2.200"/></svg>
<div class="abs" style="left:259.40px;top:465.90px;width:116.80px;height:7.70px;background:#fbfbfe;border:0.6px solid #dfe2ee"></div>
<svg style="left:370.60px;top:469.40px" width="2.80" height="1.80" viewBox="0 0 10 7"><path d="M1 1.500L5 5.500l4-4" stroke="#8a8a8a" stroke-width="1.500" fill="none"/></svg>
<svg style="left:381.60px;top:467.00px" width="6.00" height="6.00" viewBox="0 0 16 16"><path d="M5 1.500h6v7h3.500L8 15 1.500 8.500H5z" fill="#fdeaa0" stroke="#dc9a1c" stroke-width="1.300"/></svg>
<svg style="left:391.60px;top:467.10px" width="5.80" height="5.80" viewBox="0 0 16 16"><path d="M5 14.500h6v-7h3.500L8 1 1.500 7.500H5z" fill="#fdeaa0" stroke="#dc9a1c" stroke-width="1.300"/></svg>
<svg style="left:402.20px;top:466.70px" width="6.60" height="6.60" viewBox="0 0 16 16"><path d="M2 14l2-4.500 8-7.500 2.500 2.500-8 7.500z" fill="#dcdcdc" stroke="#bcbcbc" stroke-width=".9"/></svg>
<svg style="left:413.90px;top:469.35px" width="4.20" height="2.10" viewBox="0 0 10 5"><path d="M0 0H10L5 5Z" fill="#2f5fb3"/></svg>
<div class="abs" style="left:423.45px;top:465.50px;width:0;height:8.00px;border-left:0.7px dotted #c4cbdc"></div>
<span class="f" style="left:427.00px;top:465.37px;font-size:5.9px;line-height:7.67px;color:#222;transform:scaleX(0.8488)">一致なし</span>
<div class="abs" style="left:462.10px;top:464.70px;width:51.50px;height:9.10px;background:#fff;border:0.6px solid #c9ccd6"></div>
<div class="abs" style="left:462.60px;top:465.20px;width:7.40px;height:8.40px;background:#fbf6df"></div>
<div class="abs" style="left:470.00px;top:465.20px;width:34.50px;height:8.40px;background:#f6b667"></div>
<span class="f" style="left:473.40px;top:465.56px;font-size:5.9px;line-height:7.67px;color:#222;transform:scaleX(0.9654)">127M / 699M</span>
<svg style="left:517.00px;top:466.00px" width="7.20" height="7.20" viewBox="0 0 16 16"><path d="M3 4h10l-1 11H4z" fill="#6f9edc" stroke="#3f66a8" stroke-width="1"/><rect x="2" y="2" width="12" height="2.200" fill="#3f66a8"/><path d="M6 6.500v6M8 6.500v6M10 6.500v6" stroke="#4aa85a" stroke-width="1"/></svg>
<div class="abs" style="left:165.20px;top:85.60px;width:5.60px;height:288.00px;background:#a5c8f4"></div>
<div class="abs" style="left:182.00px;top:313.10px;width:443.50px;height:5.50px;background:#e8f2fe"></div>
<div class="abs" style="left:515.00px;top:51.00px;width:0.60px;height:323.50px;background:#ececec"></div>
<div id="ln"><div>1</div><div>2</div><div>3</div><div>7</div><div>8</div><div>9</div><div>10</div><div>11</div><div>12</div><div>13</div><div>14</div><div>15</div><div>16</div><div>17</div><div>18</div><div>19</div><div>20</div><div>21</div><div>22</div><div>23</div><div>24</div><div>25</div><div>26</div><div>27</div><div>28</div><div>29</div><div>30</div><div>31</div><div>32</div><div>33</div><div>34</div><div>35</div><div>36</div><div>37</div><div>38</div><div>39</div><div>40</div><div>41</div><div>42</div><div>43</div><div>44</div><div>45</div><div>46</div><div>47</div><div>48</div><div>49</div><div>50</div><div>51</div><div>52</div><div>53</div><div>54</div><div>55</div><div>56</div><div>57</div><div>58</div><div>59</div><div>60</div><div>61</div></div>
<div id="code"><div><span class="k">package</span> jp.vstone.sample;</div><div></div><div><span class="k">import</span> jp.vstone.RobotLib.CRobotMem;</div><div></div><div><span class="k">public</span> <span class="k">class</span> motor_test {</div><div><span class="tb">    </span><span class="k">static</span> <span class="k">final</span> String <span class="t">TAG</span> = <span class="s">"motor_test"</span>;</div><div><span class="tb">    </span><span class="k">public</span> <span class="k">static</span> <span class="k">void</span> main(String <span class="p">args</span>[]){</div><div><span class="tb">    </span><span class="tb">    </span>CRobotUtil.<span class="b">Log</span>(<span class="t">TAG</span>, <span class="s">"Start "</span> + <span class="t">TAG</span>);</div><div></div><div><span class="tb">    </span><span class="tb">    </span>CRobotPose <span class="v">pose</span> = <span class="k">new</span> CRobotPose();</div><div><span class="tb">    </span><span class="tb">    </span><span class="c">//VSMD<span class="j">と通信ソケット・メモリアクセス用クラス</span></span></div><div><span class="tb">    </span><span class="tb">    </span>CRobotMem <span class="v">mem</span> = <span class="k">new</span> CRobotMem();</div><div></div><div><span class="tb">    </span><span class="tb">    </span><span class="c">//Sota<span class="j">用モーション制御クラス</span></span></div><div><span class="tb">    </span><span class="tb">    </span>CSotaMotion <span class="v">motion</span> = <span class="k">new</span> CSotaMotion(<span class="v">mem</span>);</div><div></div><div><span class="tb">    </span><span class="tb">    </span><span class="k">if</span>(<span class="v">mem</span>.Connect()){</div><div><span class="tb">    </span><span class="tb">    </span><span class="tb">    </span><span class="c">//VSMD<span class="j">を初期化</span></span></div><div><span class="tb">    </span><span class="tb">    </span><span class="tb">    </span><span class="v">motion</span>.InitRobot_Sota();</div><div></div><div><span class="tb">    </span><span class="tb">    </span><span class="tb">    </span>CRobotUtil.<span class="b">Log</span>(<span class="t">TAG</span>, <span class="s">"Rev. "</span> + <span class="v">mem</span>.FirmwareRev.get());</div><div></div><div><span class="tb">    </span><span class="tb">    </span><span class="tb">    </span>Short[] <span class="v">pos</span> = <span class="v">motion</span>.getReadpos();</div><div><span class="tb">    </span><span class="tb">    </span><span class="tb">    </span>Byte[] <span class="v">ids</span> = <span class="v">motion</span>.getDefaultIDs();</div><div></div><div><span class="tb">    </span><span class="tb">    </span><span class="tb">    </span>CRobotUtil.<span class="b">Log</span>(<span class="t">TAG</span>, <span class="s">"Read Pos. ID:"</span> + <span class="v">ids</span>[1] + <span class="s">" , Pos:"</span> + <span class="v">pos</span>[1]);</div><div><span class="tb">    </span><span class="tb">    </span><span class="tb">    </span>CRobotUtil.<span class="b">Log</span>(<span class="t">TAG</span>, <span class="s">"Read Pos. ID:"</span> + <span class="v">ids</span>[3] + <span class="s">" , Pos:"</span> + <span class="v">pos</span>[3]);</div><div></div><div><span class="tb">    </span><span class="tb">    </span><span class="tb">    </span><span class="c">//<span class="j">サーボモータを現在位置でトルク</span>On<span class="j">にする</span></span></div><div><span class="tb">    </span><span class="tb">    </span><span class="tb">    </span>CRobotUtil.<span class="b">Log</span>(<span class="t">TAG</span>, <span class="s">"Servo On"</span>);</div><div><span class="tb">    </span><span class="tb">    </span><span class="tb">    </span><span class="v">motion</span>.ServoOn();</div><div></div><div><span class="tb">    </span><span class="tb">    </span><span class="tb">    </span><span class="c">//<span class="j">右肩ピッチ軸と左肩ピッチ軸を動作</span></span></div><div><span class="tb">    </span><span class="tb">    </span><span class="tb">    </span><span class="v">pose</span>.SetPose(<span class="k">new</span> Byte[] {2, 4}  <span class="c">//id</span></div><div><span class="tb">    </span><span class="tb">    </span><span class="tb">    </span>,  <span class="k">new</span> Short[]{0, 0}<span class="tb">    </span><span class="c">//target pos</span></div><div><span class="tb">    </span><span class="tb">    </span><span class="tb">    </span><span class="tb">    </span><span class="tb">    </span>);</div><div><span class="tb">    </span><span class="tb">    </span><span class="tb">    </span><span class="v">motion</span>.play(<span class="v">pose</span>,1000);</div><div><span class="tb">    </span><span class="tb">    </span><span class="tb">    </span><span class="v">motion</span>.waitEndinterpAll();</div><div><span class="tb">    </span><span class="tb">    </span><span class="tb">    </span>CRobotUtil.<span class="b">wait</span>(2000);</div><div></div><div><span class="tb">    </span><span class="tb">    </span><span class="tb">    </span><span class="v">pose</span>.SetPose(<span class="k">new</span> Byte[] {2, 4}  <span class="c">//id</span></div><div><span class="tb">    </span><span class="tb">    </span><span class="tb">    </span>,  <span class="k">new</span> Short[]{500, -500}<span class="tb">   </span><span class="c">//target pos</span></div><div><span class="tb">    </span><span class="tb">    </span><span class="tb">    </span><span class="tb">    </span><span class="tb">    </span>);</div><div><span class="tb">    </span><span class="tb">    </span><span class="tb">    </span><span class="v">motion</span>.play(<span class="v">pose</span>,1000);</div><div><span class="tb">    </span><span class="tb">    </span><span class="tb">    </span><span class="v">motion</span>.waitEndinterpAll();</div><div><span class="tb">    </span><span class="tb">    </span><span class="tb">    </span>CRobotUtil.<span class="b">wait</span>(2000);</div><div></div><div><span class="tb">    </span><span class="tb">    </span><span class="tb">    </span>CRobotUtil.<span class="b">wait</span>(1000);</div><div></div><div><span class="tb">    </span><span class="tb">    </span><span class="tb">    </span><span class="v">pose</span>.SetPose(<span class="k">new</span> Byte[] {2 ,4}  <span class="c">//id</span></div><div><span class="tb">    </span><span class="tb">    </span><span class="tb">    </span><span class="tb">    </span><span class="tb">    </span><span class="tb">    </span>,  <span class="k">new</span> Short[]{-800 ,800}<span class="c">//target pos</span></div><div><span class="tb">    </span><span class="tb">    </span><span class="tb">    </span>);</div><div><span class="tb">    </span><span class="tb">    </span><span class="tb">    </span><span class="v">motion</span>.play(<span class="v">pose</span>,1500);</div><div><span class="tb">    </span><span class="tb">    </span><span class="tb">    </span><span class="v">motion</span>.waitEndinterpAll();</div><div><span class="tb">    </span><span class="tb">    </span><span class="tb">    </span>CRobotUtil.<span class="b">wait</span>(2000);</div><div></div><div><span class="tb">    </span><span class="tb">    </span><span class="tb">    </span><span class="c">//<span class="j">サーボモータのトルクオフ</span></span></div><div><span class="tb">    </span><span class="tb">    </span><span class="tb">    </span>CRobotUtil.<span class="b">Log</span>(<span class="t">TAG</span>, <span class="s">"Servo Off"</span>);</div></div>
<svg style="left:176.50px;top:65.00px" width="3.80" height="3.80" viewBox="0 0 10 10"><circle cx="5" cy="5" r="4.2" fill="#fff" stroke="#5f87c8" stroke-width="1.5"/><path d="M2.500 5h5 M5 2.500v5" stroke="#2f56a0" stroke-width="1.600" fill="none"/></svg>
<svg style="left:176.50px;top:87.20px" width="3.80" height="3.80" viewBox="0 0 10 10"><circle cx="5" cy="5" r="4.2" fill="#fff" stroke="#5f87c8" stroke-width="1.5"/><path d="M2.500 5h5" stroke="#2f56a0" stroke-width="1.600" fill="none"/></svg>
<svg style="left:282.40px;top:64.80px" width="2.80" height="4.40" viewBox="0 0 2.8 4.4"><rect x="0.3" y="0.3" width="2.2" height="3.8" fill="none" stroke="#8a8a8a" stroke-width="0.5"/></svg>
</body></html>
